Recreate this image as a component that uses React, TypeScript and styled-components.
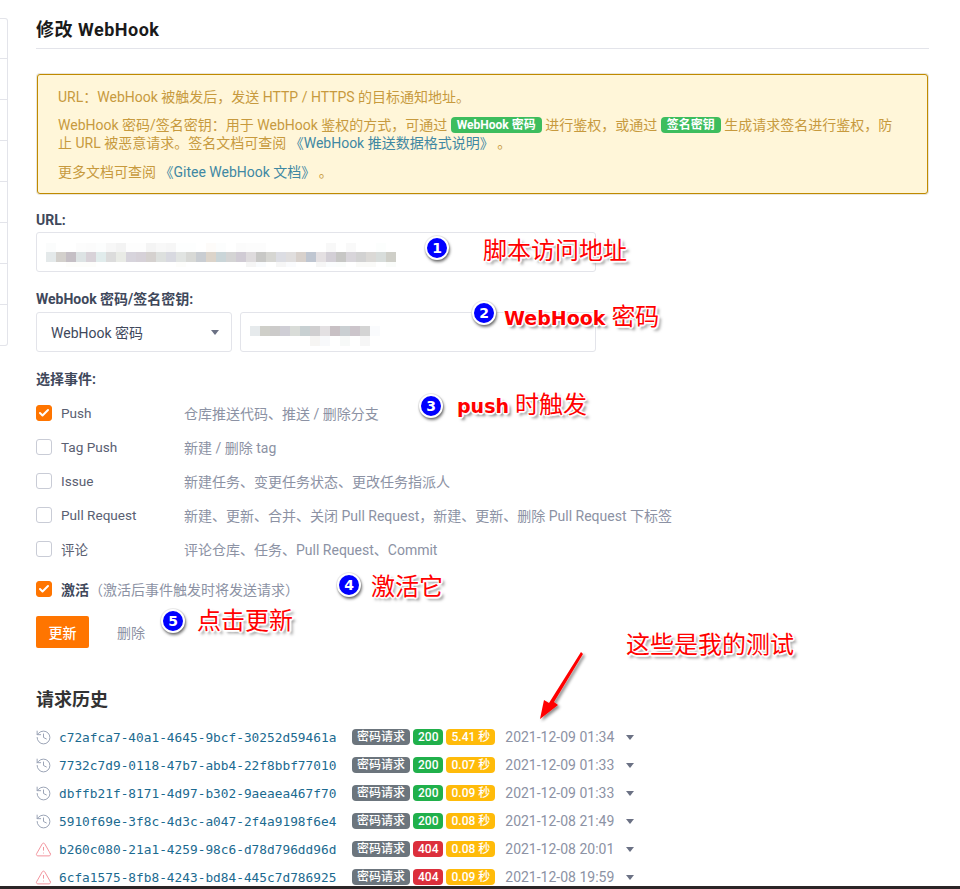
import React from "react";
import styled, { createGlobalStyle } from "styled-components";
import { History, TriangleAlert, Check } from "lucide-react";

const GlobalStyle = createGlobalStyle`
  body {
    margin: 0;
    background: #fff;
    color: #40485b;
    font-family: Roboto, "Noto Sans CJK SC", sans-serif;
    font-size: 14px;
  }
`;

const Page = styled.div`
  position: relative;
  display: flex;
  flex-direction: column;
  height: 889px;
  overflow: hidden;
`;

const Content = styled.div`
  flex: 1;
  min-height: 0;
  overflow: hidden;
  display: flex;
  align-items: flex-start;
`;

const TaskBar = styled.div`
  flex: none;
  height: 3px;
  background: #2b2526;
`;

const SideNav = styled.ul`
  flex: none;
  width: 7px;
  margin: 18px 28px 0 0;
  padding: 0;
  list-style: none;
  border: 1px solid #e3e4ea;
  border-left: 0;
  border-radius: 0 3px 3px 0;
`;

const SideRow = styled.li`
  height: 40px;
  border-top: 1px solid #e3e4ea;

  &:first-child {
    height: 39px;
    border-top: 0;
  }
`;

const Main = styled.main`
  width: 893px;
`;

const Title = styled.h2`
  margin: 0;
  padding: 17px 0 6px;
  font-size: 18px;
  line-height: 25px;
  font-weight: 700;
  letter-spacing: 0.5px;
  color: #1a1a1a;
  border-bottom: 1px solid #e3e4ea;
`;

const Alert = styled.div`
  margin: 25px 1px 0;
  padding: 13px 20px 12px;
  background: #fff6d9;
  border: 1px solid #c08a00;
  border-radius: 3px;
  box-shadow: 0 0 0 1px #e9e6dc;
  color: #c79a3e;
  line-height: 18px;

  p {
    margin: 0 0 11px;
  }

  p:first-child {
    margin-bottom: 10px;
  }

  p:last-child {
    margin-bottom: 0;
  }
`;

const DocLink = styled.a`
  color: #3f88a3;
`;

const KeyTag = styled.span`
  display: inline-block;
  padding: 0 6px;
  border-radius: 4px;
  background: #3dbd5e;
  color: #fff;
  font-size: 12px;
  font-weight: 700;
  line-height: 16px;
  vertical-align: 1px;
`;

const FieldLabel = styled.label`
  display: block;
  margin: 17px 0 3px;
  font-size: 14px;
  font-weight: 700;
  line-height: 20px;
`;

const UrlLabel = styled(FieldLabel)`
  margin: 16px 0 2px;
`;

const InputBox = styled.div<{ $width: number }>`
  flex: none;
  box-sizing: border-box;
  width: ${(p) => p.$width}px;
  height: 40px;
  border: 1px solid #e3e4ea;
  border-radius: 3px;
  display: flex;
  align-items: center;
`;

const SecretRow = styled.div`
  display: flex;
  gap: 8px;
`;

const SelectBox = styled(InputBox)`
  justify-content: space-between;
  padding: 0 12px 0 14px;
  color: #40485b;
`;

const Caret = styled.i`
  flex: none;
  width: 0;
  height: 0;
  border: 4px solid transparent;
  border-top: 5px solid #6b7184;
  border-bottom: 0;
`;

const EventList = styled.div`
  margin-top: 7px;
`;

const EventRow = styled.div`
  display: flex;
  align-items: center;
  height: 34px;
`;

const Box = styled.span<{ $on?: boolean }>`
  flex: none;
  box-sizing: border-box;
  width: 16px;
  height: 16px;
  margin-right: 9px;
  border-radius: 3px;
  border: 1px solid ${(p) => (p.$on ? "#ff7500" : "#c9ccd6")};
  background: ${(p) => (p.$on ? "#ff7500" : "#fff")};
  display: flex;
  align-items: center;
  justify-content: center;
  color: #fff;
`;

const EventName = styled.span`
  flex: none;
  width: 123px;
  font-size: 13.6px;
  color: #5a6072;
`;

const Muted = styled.span`
  color: #8c92a4;
`;

const ActiveRow = styled(EventRow)`
  margin-top: 6px;
`;

const ActiveName = styled.span`
  font-weight: 700;
  color: #40485b;
`;

const Actions = styled.div`
  display: flex;
  align-items: center;
  margin-top: 10px;
`;

const SaveButton = styled.button`
  width: 53px;
  height: 32px;
  padding: 0;
  border: 0;
  border-radius: 2px;
  background: #ff7500;
  color: #fff;
  font: inherit;
  font-weight: 500;
`;

const DeleteLink = styled.a`
  margin-left: 28px;
  color: #8c92a4;
`;

const SectionTitle = styled.h3`
  margin: 39px 0 10px;
  font-size: 18px;
  line-height: 26px;
  font-weight: 700;
  color: #333;
`;

const LogRow = styled.div`
  display: flex;
  align-items: center;
  height: 28px;
`;

const LogIcon = styled.span<{ $failed?: boolean }>`
  flex: none;
  width: 24px;
  margin-left: -1px;
  display: flex;
  color: ${(p) => (p.$failed ? "#f2939c" : "#9aa3b5")};
`;

const LogId = styled.span`
  flex: none;
  width: 293px;
  font-family: "DejaVu Sans Mono", monospace;
  font-size: 12.8px;
  color: #1b6a90;
`;

const Badge = styled.span<{ $bg: string }>`
  flex: none;
  margin-right: 3px;
  padding: 0 5px;
  border-radius: 4px;
  background: ${(p) => p.$bg};
  color: #fff;
  font-size: 12px;
  font-weight: 500;
  line-height: 16px;
`;

const LogTime = styled.span`
  margin: 0 12px 0 7px;
  color: #8c92a4;
`;

const Mosaic = styled.svg`
  display: block;
  flex: none;
`;

const Callout = styled.div<{ $x: number; $y: number }>`
  position: absolute;
  left: ${(p) => p.$x}px;
  top: ${(p) => p.$y}px;
  font-size: 24px;
  line-height: 30px;
  white-space: nowrap;
  color: #f00;
  text-shadow: -1px -1px 0 #fff, 1px -1px 0 #fff, -1px 1px 0 #fff, 1px 1px 0 #fff,
    0 2px 1px #fff, 2px 0 1px #fff, 3px 3px 3px rgba(0, 0, 0, 0.5);

  b {
    font-family: "DejaVu Sans", sans-serif;
    font-weight: 700;
    font-size: 19px;
  }
`;

const Step = styled.div<{ $x: number; $y: number }>`
  position: absolute;
  left: ${(p) => p.$x - 12}px;
  top: ${(p) => p.$y - 12}px;
  box-sizing: border-box;
  width: 24px;
  height: 24px;
  border: 2px solid #fff;
  border-radius: 50%;
  background: #00f;
  box-shadow: 1px 2px 3px rgba(0, 0, 0, 0.55), 0 0 0 1px #eee;
  color: #fff;
  font-family: "DejaVu Sans", sans-serif;
  font-size: 14px;
  font-weight: 700;
  line-height: 20px;
  text-align: center;
`;

const ArrowSvg = styled.svg`
  position: absolute;
  left: 530px;
  top: 645px;
  overflow: visible;
`;

const urlTop = ["#fbfcfc", "#fff", "#fff", "#fcfcfc", "#fbfbfb", "#fcfdfd", "#f7f7f7", "#f3f3f3", "#fdfdfd", "#fdfdfd", "#f4f4f4", "#f8f8f8", "#f6f6f6", "#fdfefe", "#fdfefe", "#fff", "#fdfbf9", "#fcfdfd", "#fff", "#fbfbfb", "#fcfcfc", "#fcfcfc", "#fff", "#fff", "#fff", "#fff", "#fff", "#fff", "#f8f8f8", "#fff", "#f9f9f9", "#fff", "#fff", "#fcfefd"];
const urlMid = ["#e4e9ea", "#d3d0cc", "#c5bfc5", "#dde3e4", "#d8d2d8", "#e1ecec", "#dcdcdc", "#e9ebe6", "#d7d4dc", "#d6d1d8", "#d5d1cf", "#dde0de", "#d8d9e0", "#e1e4e2", "#d8d9d6", "#c9cdd2", "#dcd4ca", "#cad5d8", "#d4d4d4", "#d0cbd4", "#dedbdd", "#c8c8c6", "#d6d6d2", "#dcdde3", "#e0dede", "#d8d1cc", "#bfc6d1", "#e4e0e2", "#d3cfd6", "#c7c7c5", "#d8d5da", "#d2d2d2", "#dbd9d6", "#d8dddb", "#cfcfc8", "#f6fafd"];
const urlLow = ["#fff", "#fff", "#fdfdfb", "#fdfdfb", "#fdfdfb", "#fff", "#fff", "#fff", "#fff", "#fff", "#fff", "#fff", "#fff", "#fdfdfb", "#fff", "#fff", "#fff", "#fff", "#fff", "#fff", "#f5f5f5", "#f9fbfd", "#fff", "#f6f6f6", "#fafbfd", "#fff", "#fff", "#f6f6f6", "#fafcfd", "#fafcfb", "#fff", "#fafaf8", "#fafaf8", "#fff", "#fafcfa"];
const secretMid = ["#e6eaec", "#cfcfc9", "#cccbca", "#cfced5", "#d9dcd8", "#c8d0d2", "#d0cfd0", "#e3e0e2", "#c8c0c4", "#cacfd2", "#ccc5cb", "#d4d4d4", "#fafbfd"];
const secretLow = ["#fff", "#fff", "#fff", "#fff", "#fff", "#fff", "#f6f5f3", "#f8f9fb", "#fff", "#f7f9f8", "#fff", "#f6f6f6"];

const Blur: React.FC<{ rows: string[][]; rowY: number[] }> = ({ rows, rowY }) => (
  <Mosaic width={rows[0].length * 10 + 10} height={30}>
    {rows.map((row, r) =>
      row.map((c, i) => (
        <rect key={`${r}-${i}`} x={i * 10} y={rowY[r]} width={10} height={r === 1 || rows.length === 2 ? 10 : 9} fill={c} />
      )),
    )}
  </Mosaic>
);

const UrlField = styled(InputBox)`
  padding-left: 9px;
`;

const SecretField = styled(InputBox)`
  padding-left: 9px;
`;

const events = [
  { name: "Push", desc: "仓库推送代码、推送 / 删除分支", on: true },
  { name: "Tag Push", desc: "新建 / 删除 tag" },
  { name: "Issue", desc: "新建任务、变更任务状态、更改任务指派人" },
  { name: "Pull Request", desc: "新建、更新、合并、关闭 Pull Request，新建、更新、删除 Pull Request 下标签" },
  { name: "评论", desc: "评论仓库、任务、Pull Request、Commit" },
];

const logs = [
  { id: "c72afca7-40a1-4645-9bcf-30252d59461a", code: 200, secs: "5.41 秒", at: "2021-12-09 01:34" },
  { id: "7732c7d9-0118-47b7-abb4-22f8bbf77010", code: 200, secs: "0.07 秒", at: "2021-12-09 01:33" },
  { id: "dbffb21f-8171-4d97-b302-9aeaea467f70", code: 200, secs: "0.09 秒", at: "2021-12-09 01:33" },
  { id: "5910f69e-3f8c-4d3c-a047-2f4a9198f6e4", code: 200, secs: "0.08 秒", at: "2021-12-08 21:49" },
  { id: "b260c080-21a1-4259-98c6-d78d796dd96d", code: 404, secs: "0.08 秒", at: "2021-12-08 20:01" },
  { id: "6cfa1575-8fb8-4243-bd84-445c7d786925", code: 404, secs: "0.09 秒", at: "2021-12-08 19:59" },
];

const steps = [
  { n: 1, x: 437, y: 248 },
  { n: 2, x: 484, y: 313 },
  { n: 3, x: 431, y: 406 },
  { n: 4, x: 349, y: 585 },
  { n: 5, x: 173, y: 621 },
];

export default function App() {
  return (
    <Page>
      <GlobalStyle />
      <Content>
        <SideNav>
          {Array.from({ length: 8 }, (_, i) => (
            <SideRow key={i} />
          ))}
        </SideNav>
        <Main>
          <Title>修改 WebHook</Title>
          <Alert>
            <p>URL：WebHook 被触发后，发送 HTTP / HTTPS 的目标通知地址。</p>
            <p>
              WebHook 密码/签名密钥：用于 WebHook 鉴权的方式，可通过 <KeyTag>WebHook 密码</KeyTag> 进行鉴权，或通过{" "}
              <KeyTag>签名密钥</KeyTag> 生成请求签名进行鉴权，防
              <br />
              止 URL 被恶意请求。签名文档可查阅 <DocLink>《WebHook 推送数据格式说明》</DocLink> 。
            </p>
            <p>
              更多文档可查阅 <DocLink>《Gitee WebHook 文档》</DocLink> 。
            </p>
          </Alert>

          <UrlLabel>URL:</UrlLabel>
          <UrlField $width={560}>
            <Blur rows={[urlTop, urlMid, urlLow]} rowY={[6, 15, 25]} />
          </UrlField>

          <FieldLabel>WebHook 密码/签名密钥:</FieldLabel>
          <SecretRow>
            <SelectBox $width={196}>
              WebHook 密码
              <Caret />
            </SelectBox>
            <SecretField $width={356}>
              <Blur rows={[secretMid, secretLow]} rowY={[9, 19]} />
            </SecretField>
          </SecretRow>

          <FieldLabel>选择事件:</FieldLabel>
          <EventList>
            {events.map((ev) => (
              <EventRow key={ev.name}>
                <Box $on={ev.on}>{ev.on && <Check size={12} strokeWidth={4} />}</Box>
                <EventName>{ev.name}</EventName>
                <Muted>{ev.desc}</Muted>
              </EventRow>
            ))}
          </EventList>

          <ActiveRow>
            <Box $on>
              <Check size={12} strokeWidth={4} />
            </Box>
            <ActiveName>激活</ActiveName>
            <Muted>（激活后事件触发时将发送请求）</Muted>
          </ActiveRow>

          <Actions>
            <SaveButton>更新</SaveButton>
            <DeleteLink>删除</DeleteLink>
          </Actions>

          <SectionTitle>请求历史</SectionTitle>
          {logs.map((log) => (
            <LogRow key={log.id}>
              <LogIcon $failed={log.code !== 200}>
                {log.code === 200 ? <History size={17} strokeWidth={1.4} /> : <TriangleAlert size={17} strokeWidth={1.4} />}
              </LogIcon>
              <LogId>{log.id}</LogId>
              <Badge $bg="#6c757d">密码请求</Badge>
              <Badge $bg={log.code === 200 ? "#20b04b" : "#dc2f3c"}>{log.code}</Badge>
              <Badge $bg="#ffbb0a">{log.secs}</Badge>
              <LogTime>{log.at}</LogTime>
              <Caret />
            </LogRow>
          ))}
        </Main>
      </Content>
      <TaskBar />

      {steps.map((s) => (
        <Step key={s.n} $x={s.x} $y={s.y}>
          {s.n}
        </Step>
      ))}
      <Callout $x={483} $y={236}>脚本访问地址</Callout>
      <Callout $x={504} $y={302}>
        <b>WebHook</b> 密码
      </Callout>
      <Callout $x={457} $y={390}>
        <b>push</b> 时触发
      </Callout>
      <Callout $x={371} $y={572}>激活它</Callout>
      <Callout $x={197} $y={606}>点击更新</Callout>
      <Callout $x={626} $y={630}>这些是我的测试</Callout>
      <ArrowSvg width={60} height={80}>
        <defs>
          <filter id="arrow-shadow" x="-30%" y="-30%" width="160%" height="160%">
            <feDropShadow dx="2" dy="2" stdDeviation="1.5" floodColor="#000" floodOpacity="0.45" />
          </filter>
        </defs>
        <polygon
          points="51,7 53,9 24,57 28,60 10,74 14,55 19,58"
          fill="#f00"
          filter="url(#arrow-shadow)"
        />
      </ArrowSvg>
    </Page>
  );
}
